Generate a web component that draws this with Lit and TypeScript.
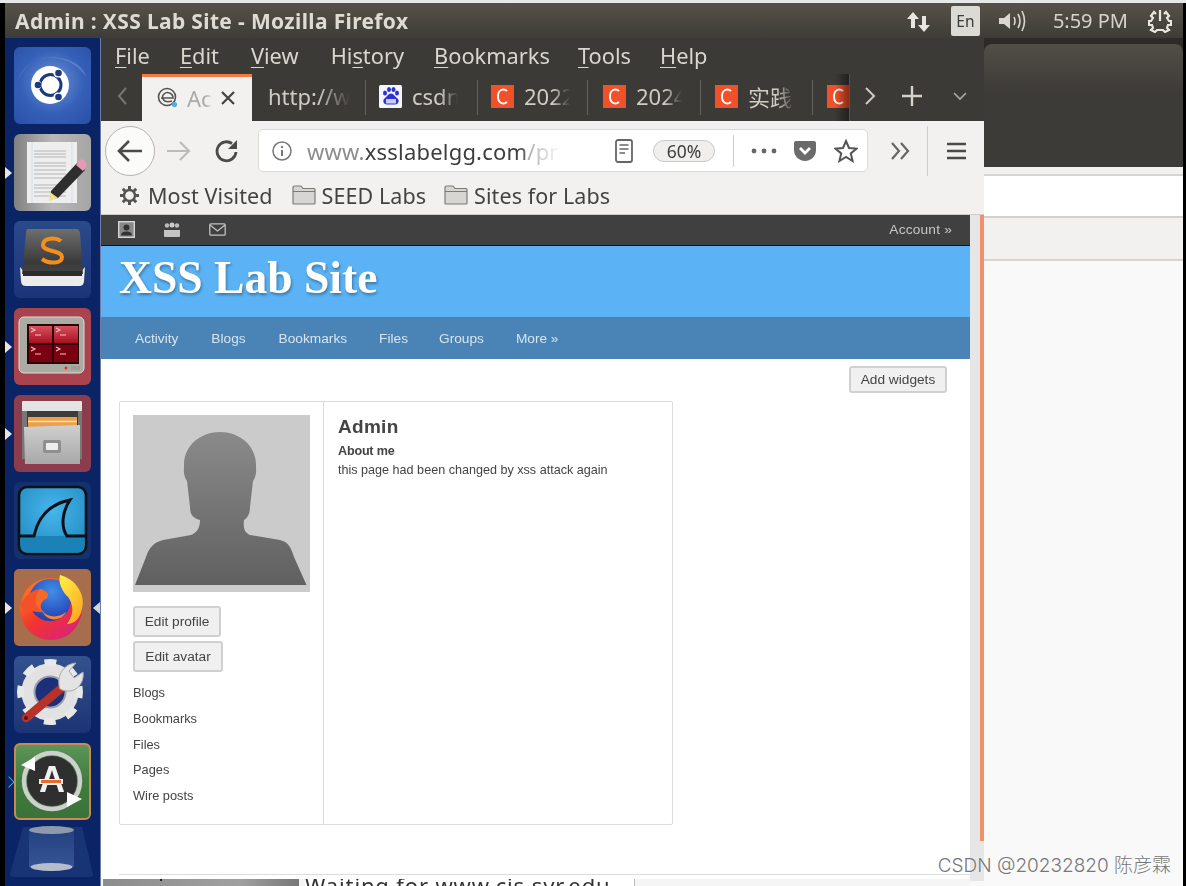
import { LitElement, html, css, svg } from "lit";
import { customElement } from "lit/decorators.js";

const tileSvg = (content: unknown) => html`<svg viewBox="0 0 77 77" width="77" height="77">${content}</svg>`;

const ubuntu = svg`<defs><radialGradient id="ub" cx="50%" cy="45%" r="75%"><stop offset="0" stop-color="#6f93d6"/><stop offset=".55" stop-color="#3560b8"/><stop offset="1" stop-color="#2a4fa6"/></radialGradient></defs>
<rect width="77" height="77" rx="6" fill="url(#ub)"/>
<path d="M4 34C10 8 52 0 72 30 70 16 46 6 26 12 14 16 8 24 4 34Z" fill="#fff" opacity=".16"/>
<circle cx="36" cy="38" r="19" fill="#fff"/>
<circle cx="36.500" cy="38" r="10.500" fill="none" stroke="#1c3a80" stroke-width="3"/>
<circle cx="23" cy="38" r="4.600" fill="#fff"/><circle cx="44" cy="26" r="4.600" fill="#fff"/><circle cx="44" cy="50" r="4.600" fill="#fff"/>
<circle cx="24" cy="38" r="3.300" fill="#1c3a80"/><circle cx="44.500" cy="26" r="3.300" fill="#1c3a80"/><circle cx="44.500" cy="50" r="3.300" fill="#1c3a80"/>`;

const gedit = svg`<defs><linearGradient id="ge" x1="0" x2="1"><stop offset="0" stop-color="#808080"/><stop offset=".5" stop-color="#b8b8b8"/><stop offset="1" stop-color="#a5a5a5"/></linearGradient></defs>
<rect width="77" height="77" rx="6" fill="url(#ge)"/>
<rect x="13" y="8" width="50" height="61" fill="#eeeeee"/>
<path d="M18 8V69M58 8V69" stroke="#d4dcec" stroke-width="1"/>
${[17,20,23,29,32,36,40,44,51,54,58,62].map(y => svg`<path d="M20 ${y}H52" stroke="#b5b5b5" stroke-width="1"/>`)}
<path d="M37 57 L63 29 L71 36 L44 64 L36 65Z" fill="#2e2e2e"/><path d="M62 31 L66 26 Q69 24 71 27 L73 31 L69 37Z" fill="#e69ab4"/>
<path d="M36 58 L44 64 L35 67Z" fill="#f1e08a"/>`;

const sublime = svg`<defs><linearGradient id="su" x1="0" y1="0" x2="0" y2="1"><stop offset="0" stop-color="#2a4a8a"/><stop offset="1" stop-color="#1c3478"/></linearGradient>
<linearGradient id="su2" x1="0" y1="0" x2="0" y2="1"><stop offset="0" stop-color="#6e6e6e"/><stop offset=".75" stop-color="#3a3a3a"/><stop offset="1" stop-color="#444"/></linearGradient></defs>
<rect width="77" height="77" rx="6" fill="url(#su)"/>
<path d="M6 46 L7 60 Q7 65 12 65H65Q70 65 70 60L71 46 L66 52H11Z" fill="#ececec"/>
<path d="M14 8H63Q65 8 66 12L69 53H8L12 12Q12 8 14 8Z" fill="url(#su2)"/>
<rect x="9" y="50" width="59" height="5" fill="#2c2c2c"/>
<path d="M47 20 C41 15.500 29 17 29 24 C29 31 48 29 48 36 C48 43 35 43 28 38" fill="none" stroke="#f58e1c" stroke-width="4"/>`;

const terminal = svg`<defs><linearGradient id="t1" x1="0" y1="0" x2="0" y2="1"><stop offset="0" stop-color="#d8505e"/><stop offset="1" stop-color="#a81020"/></linearGradient></defs>
<rect width="77" height="77" rx="6" fill="#a9444f"/>
<rect x="5" y="9" width="65" height="56" rx="5" fill="#acaba3" stroke="#dcdbd5" stroke-width="1"/>
<rect x="13" y="16" width="52" height="40" fill="#2a0407"/>
<rect x="15" y="18" width="23" height="17" fill="url(#t1)"/><rect x="40" y="18" width="24" height="17" fill="url(#t1)"/>
<rect x="15" y="37" width="23" height="17" fill="#7c0010"/><rect x="40" y="37" width="24" height="17" fill="#7c0010"/>
${[[17,20],[42,20],[17,39],[42,39]].map(([x,y]) => svg`<path d="M${x} ${y}l4 2-4 2M${x+4} ${y+7}h6" fill="none" stroke="#f2c6c6" stroke-width="1.100"/>`)}
<circle cx="52" cy="60" r="1.500" fill="#f22"/><rect x="57" y="58" width="9" height="4" fill="#9e9c95"/>`;

const files = svg`<defs><linearGradient id="fi" x1="0" y1="0" x2="0" y2="1"><stop offset="0" stop-color="#cfcfcf"/><stop offset="1" stop-color="#a8a8a8"/></linearGradient></defs>
<rect width="77" height="77" rx="6" fill="#8c3d4d"/>
<rect x="8" y="6" width="60" height="16" rx="1" fill="#e4e4e4"/>
<rect x="8" y="16" width="60" height="48" fill="#777"/>
<rect x="13" y="16" width="51" height="16" fill="#3c3c3c"/>
<rect x="14" y="22" width="49" height="11" fill="#eda04a"/><path d="M14 26.500H63" stroke="#fbe2b8" stroke-width="1.400"/>
<path d="M10 32 L66 30 L66 69 L11 69Z" fill="url(#fi)"/>
<rect x="29" y="45" width="18" height="13" rx="2" fill="#8f8f8f"/><rect x="32" y="48" width="12" height="7" rx="1" fill="#eee"/>`;

const wireshark = svg`<defs><radialGradient id="wi" cx="50%" cy="35%" r="75%"><stop offset="0" stop-color="#45b7ec"/><stop offset="1" stop-color="#1f86bd"/></radialGradient></defs>
<rect width="77" height="77" rx="6" fill="#15306e"/>
<rect x="5" y="5" width="67" height="67" rx="8" fill="url(#wi)" stroke="#0a1018" stroke-width="2.600"/>
<path d="M6.500 54H70.500V63Q70.500 70.500 63 70.500H14Q6.500 70.500 6.500 63Z" fill="#1b82b8"/>
<path d="M6 54H20C24 35 36 22 56 18 C49 28 46 44 53 54H71" fill="none" stroke="#0a1018" stroke-width="3"/>`;

const firefox = svg`<defs><linearGradient id="fx" x1="0" y1="0" x2=".8" y2="1"><stop offset="0" stop-color="#ff8a1f"/><stop offset=".55" stop-color="#f2352e"/><stop offset="1" stop-color="#d9217e"/></linearGradient>
<linearGradient id="fy" x1="0" y1="0" x2=".6" y2="1"><stop offset="0" stop-color="#fff14a"/><stop offset="1" stop-color="#ffab1f"/></linearGradient>
<radialGradient id="fb" cx=".55" cy=".3" r=".8"><stop offset="0" stop-color="#3f8fe8"/><stop offset="1" stop-color="#2232a8"/></radialGradient></defs>
<rect width="77" height="77" rx="5" fill="#a86d4d"/>
<circle cx="37" cy="40" r="31" fill="url(#fx)"/>
<circle cx="36" cy="31" r="21" fill="url(#fb)"/>
<path d="M46 6 C62 10 72 26 68 40 C66 50 60 55 53 55 C60 46 60 36 54 28 C48 22 44 14 46 6Z" fill="url(#fy)"/>
<path d="M13 11 C13 19 10 22 7 34 C13 26 18 21 26 20 C35 22 37 28 30 31 C26 34 25 40 30 43 C22 44 14 40 11 46 C7 38 6 30 7 34Z" fill="#f2512a"/>
<path d="M26 20 C35 22 37 28 30 31 C26 34 25 40 30 43 C22 40 18 30 26 20Z" fill="#f56a2a"/>
<path d="M28 42 C36 50 46 48 52 43 C48 52 34 54 28 42Z" fill="#f9892a"/>`;

const settings = svg`<defs><linearGradient id="se" x1="0" y1="0" x2="0" y2="1"><stop offset="0" stop-color="#34528f"/><stop offset="1" stop-color="#1d3474"/></linearGradient></defs>
<rect width="77" height="77" rx="6" fill="url(#se)"/>
<circle cx="36" cy="36" r="22" fill="none" stroke="#e2e2e2" stroke-width="13"/>
<circle cx="36" cy="36" r="29.500" fill="none" stroke="#e8e8e8" stroke-width="7" stroke-dasharray="11.580 11.590" transform="rotate(-11 36 36)"/>
<circle cx="36" cy="36" r="15.500" fill="#1d2f78"/>
<circle cx="36" cy="36" r="15.500" fill="none" stroke="#9a9fb0" stroke-width="2"/>
<path d="M12 62 L50 30" stroke="#b8322a" stroke-width="8.500" stroke-linecap="round"/>
<circle cx="12" cy="62" r="2" fill="#5b1510"/>
<path d="M46 33C42 22 48 8 62 7L55 15 60 22 69 16C71 28 60 40 46 33Z" fill="#e4e4e4" stroke="#aaa" stroke-width="1"/>`;

const updater = svg`<defs><linearGradient id="up" x1="0" y1="0" x2="0" y2="1"><stop offset="0" stop-color="#5f955a"/><stop offset=".5" stop-color="#3f7c3d"/><stop offset="1" stop-color="#3a7239"/></linearGradient></defs>
<rect x="1" y="1" width="75" height="75" rx="5" fill="url(#up)" stroke="#c98a52" stroke-width="2"/>
<circle cx="38" cy="38" r="25" fill="#2f2f2f"/>
<circle cx="38" cy="38" r="28" fill="none" stroke="#cfcfcf" stroke-width="4.500"/>
<path d="M7 22 L21 14 L21 28Z" fill="#fff"/><path d="M68 56 L53 64 L53 49Z" fill="#fff"/>
<text x="38" y="49" text-anchor="middle" font-family="Liberation Sans" font-weight="700" font-size="36" fill="#f2f2f2">A</text>
<rect x="25" y="36" width="24" height="5" fill="#f2f2f2"/><rect x="27" y="37" width="20" height="3" fill="#ec6a2c"/>`;

const trash = svg`<defs><linearGradient id="tr" x1="0" x2="0" y1="0" y2="1"><stop offset="0" stop-color="#2c4a8c"/><stop offset="1" stop-color="#4a6aa8"/></linearGradient></defs>
<path d="M9 2H68L79 49Q79 52 76 52H-1Q-4 52 -4 49Z" fill="#2a4a8a" opacity=".45"/>
<rect x="15" y="6" width="45" height="36" fill="url(#tr)" opacity=".6"/>
<ellipse cx="37.500" cy="5" rx="22.500" ry="4" fill="#8e99ad"/>
<ellipse cx="37.500" cy="42" rx="21" ry="4" fill="#b6bccb"/>`;

const icon = (w: number, h: number, body: unknown) =>
  html`<svg class="ico" width=${w} height=${h} viewBox="0 0 ${w} ${h}">${body}</svg>`;

const folder = icon(24, 20, svg`<path d="M1 3Q1 1 3 1H9L11 3.500H22Q23 3.500 23 4.500V18Q23 19 22 19H2Q1 19 1 18Z" fill="#d7d6d2" stroke="#7d7b76" stroke-width="1.200"/><path d="M1 6.500H23" stroke="#7d7b76" stroke-width="1"/>`);
const cIcon = icon(23, 23, svg`<rect width="23" height="23" fill="#f0512a"/><path d="M16 6C12.500 3 7 4.500 7 11.500S12.500 20 16 17" fill="none" stroke="#fff" stroke-width="1.900"/>`);
const baidu = icon(23, 23, svg`<rect width="23" height="23" rx="1.500" fill="#f4f6fb"/>
<ellipse cx="6" cy="8" rx="2" ry="2.600" fill="#2b32d6"/><ellipse cx="10" cy="4.500" rx="2" ry="2.600" fill="#2b32d6"/><ellipse cx="14.500" cy="4.500" rx="2" ry="2.600" fill="#2b32d6"/><ellipse cx="18" cy="8" rx="2" ry="2.600" fill="#2b32d6"/>
<path d="M12 8.500C9 8.500 8 12 5.500 13.500 3.500 15 4 19.500 8 19.500H16C20 19.500 20.500 15 18.500 13.500 16 12 15 8.500 12 8.500Z" fill="#2b32d6"/>
<rect x="7" y="14" width="10" height="4.500" fill="#fff" opacity=".75"/>`);

const tabs = [
  { ico: baidu, text: "csdn", w: 46, box: 112, pad: 13 },
  { ico: cIcon, text: "2022", w: 46, box: 110, pad: 13 },
  { ico: cIcon, text: "2024", w: 46, box: 113, pad: 15 },
  { ico: cIcon, text: "实践", w: 46, box: 112, pad: 14 },
];

@customElement("app-root")
export class AppRoot extends LitElement {
  static styles = css`
    :host { display: block; width: 1186px; height: 886px; overflow: hidden; position: relative;
      font-family: "Noto Sans", "Noto Sans CJK SC", sans-serif; }
    .shot { width: 1186px; height: 886px; box-sizing: border-box; padding-top: 3px; background: #e8e8e8;
      display: flex; flex-direction: column; filter: blur(.6px); overflow: hidden; }
    .frame { flex: 1; min-height: 0; background: #000; padding: 0 3px 0 5px; display: flex; flex-direction: column; }
    .title { height: 35px; flex: none; background: linear-gradient(#565249, #3e3c37); display: flex; align-items: center; color: #dfdbd2; }
    .title b { margin-left: 10px; font-size: 21px; font-weight: 700; letter-spacing: .35px; flex: 1; white-space: nowrap; }
    .tray { display: flex; align-items: center; height: 35px; }
    .en { width: 29px; height: 30px; background: #dcdad5; color: #3c3b37; font-size: 15.5px; border-radius: 2px;
      display: flex; align-items: center; justify-content: center; margin: 0 18px 0 20px; }
    .clock { font-size: 20px; color: #d6d3cc; margin: 0 20px 0 25px; }
    .trayend { width: 11px; }
    .work { flex: 1; min-height: 0; display: flex; }
    .launcher { width: 96px; flex: none; box-sizing: border-box; background: #0a2465; border-right: 1px solid #6d7cab;
      padding: 9px 0 0 9px; display: flex; flex-direction: column; gap: 10px; }
    .tile { width: 77px; height: 77px; border-radius: 6px; position: relative; flex: none; }
    .tile svg { display: block; overflow: visible; }
    .tile.glass { margin-top: -5px; }
    .pip { position: absolute; top: 50%; margin-top: -6px; width: 0; height: 0; border: 6px solid transparent; }
    .pip.l { left: -9px; border-left: 7px solid #e6e6e6; }
    .pip.r { right: -9px; border-right: 7px solid #d5d5d5; }
    .pip.blue { left: -9px; width: 7px; height: 7px; border: 0; border-top: 1.5px solid #4aa3dc; border-right: 1.5px solid #4aa3dc;
      transform: rotate(45deg); margin-top: -4px; }
    .ff { width: 883px; flex: none; display: flex; flex-direction: column; min-height: 0; }
    .menu { height: 36px; background: #3c3a36; color: #d9d6cf; display: flex; align-items: center; gap: 30px; padding: 0 0 2px 14px; box-sizing: border-box;
      font-size: 21.8px; flex: none; }
    .menu u { text-underline-offset: 3px; text-decoration-thickness: 1px; }
    .menu span:nth-child(3) { margin-left: 2px; }
    .menu span:nth-child(4) { margin-left: 2px; }
    .menu span:nth-child(6) { margin-left: -2px; }
    .menu span:nth-child(7) { margin-left: -1px; }
    .tabs { height: 47px; background: #3c3a36; flex: none; display: flex; color: #cfccc4; font-size: 22px; align-items: center; }
    .navbtn { width: 41px; display: flex; justify-content: center; flex: none; padding-bottom: 3px; box-sizing: border-box; }
    .tab-on { width: 110px; height: 47px; background: #f2f1ef; border-top: 3px solid #f47a45; box-sizing: border-box; flex: none;
      display: flex; align-items: center; padding: 0 0 3px 15px; color: #3a3a3a; }
    .tab-on .lbl { width: 28px; margin-left: 9px; color: #aaa; overflow: hidden; white-space: nowrap; }
    .tab-on .x { margin-left: 5px; }
    .tab { display: flex; align-items: center; height: 35px; border-right: 1px solid #65635d; flex: none; box-sizing: border-box; white-space: nowrap; padding-bottom: 3px; gap: 10px; }
    .tab.last { border: 0; }
    .fade { overflow: hidden; display: block; -webkit-mask-image: linear-gradient(90deg, #000 62%, transparent);
      mask-image: linear-gradient(90deg, #000 62%, transparent); }
    .urltext.fade { -webkit-mask-image: linear-gradient(90deg, #000 82%, transparent); mask-image: linear-gradient(90deg, #000 82%, transparent); }
    .tabclip { display: flex; width: 597px; overflow: hidden; align-items: center; flex: none; height: 47px; position: relative; }
    .tabclip::after { content: ""; position: absolute; right: 0; top: 0; bottom: 0; width: 14px; background: linear-gradient(90deg, transparent, rgba(0,0,0,.45)); }
    .tabs .end { display: flex; align-items: center; flex: none; height: 47px; border-left: 1px solid #55534d; padding-bottom: 3px; box-sizing: border-box; }
    .e1, .e2, .e3 { display: flex; justify-content: center; }
    .e1 { width: 39px; } .e2 { width: 46px; } .e3 { width: 49px; }
    .nav { height: 55px; background: #f2f1ef; display: flex; align-items: center; flex: none; padding-top: 4px; box-sizing: border-box; }
    .back { width: 50px; height: 50px; border-radius: 50%; background: #fbfbfa; border: 1px solid #b5b3af; box-sizing: border-box; margin-left: 4px; display: flex; align-items: center; justify-content: center; flex: none; }
    .fwd { margin-left: 12px; } .rel { margin-left: 24px; }
    .url { width: 610px; height: 43px; box-sizing: border-box; background: #fff; border: 1px solid #dcdad7; border-radius: 5px; display: flex; align-items: center; flex: none; margin-left: 19px; }
    .inf { margin-left: 13px; }
    .urltext { width: 254px; margin-left: 15px; font-size: 22px; white-space: nowrap; color: #3d3d3d; flex: none; letter-spacing: .2px; }
    .urltext i { font-style: normal; color: #8d8d8d; }
    .rd { margin-left: 54px; }
    .pill { width: 62px; height: 22px; box-sizing: border-box; border: 1px solid #c9c9c9; background: #f0efed; border-radius: 11px; font-size: 17.5px; color: #3c3c3c;
      display: flex; align-items: center; justify-content: center; margin-left: 20px; flex: none; }
    .sep { width: 1px; height: 32px; background: #cfcdc9; margin: 0 17px 0 18px; flex: none; }
    .poc { margin-left: 16px; } .sta { margin-left: 17px; } .more { margin-left: 22px; }
    .sep.tall { margin: 0 19px 0 17px; height: 50px; }
    .bm { height: 39px; background: #f2f1ef; border-bottom: 1px solid #cfcdc9; box-sizing: border-box; display: flex; align-items: center; font-size: 21.5px; letter-spacing: .08px; color: #45433f; flex: none; padding-left: 18px; }
    .bm span { white-space: nowrap; }
    .bm .t { margin-left: 6px; } .bm .mv { margin-left: 8px; }
    .bm .f1 { margin-left: 19px; } .bm .f2 { margin-left: 18px; }
    .body { flex: 1; min-height: 0; display: flex; }
    .page { width: 869px; flex: none; background: #fff; display: flex; flex-direction: column; font-family: "Liberation Sans", sans-serif; overflow: hidden; }
    .ptop { background: #404040; border-bottom: 1px solid #111; flex: none; display: flex; align-items: center; padding: 0 18px 1px 17px; box-sizing: content-box; height: 29px; color: #c6c6c6; font-size: 13.7px; gap: 28px; }
    .ptop .acc { margin-left: auto; letter-spacing: .2px; }
    .phead { height: 71px; background: #5bb3f5; flex: none; padding-left: 18px; color: #fff; font: bold 45.6px/63px "Liberation Serif", serif; text-shadow: 1px 2px 3px rgba(0,0,0,.35); }
    .pnav { height: 42px; background: #4a84b7; flex: none; display: flex; align-items: center; gap: 32px; padding-left: 34px; color: #d7e4ef; font-size: 13.7px; }
    .pnav span:nth-child(2) { margin-left: 1px; }
    .pnav span:nth-child(3) { margin-left: 1px; }
    .pnav span:nth-child(5) { margin-left: -1px; }
    .main { flex: 1; min-height: 0; display: flex; flex-direction: column; color: #444; }
    .btn { align-self: flex-start; box-sizing: border-box; border: 2px solid #d0d0d0; border-radius: 3px; background: #f0f0f0; color: #444; font-size: 13.7px; display: flex; align-items: center; justify-content: center; }
    .addw { align-self: flex-end; margin: 7px 23px 8px 0; width: 98px; height: 28px; }
    .card { margin-left: 18px; width: 554px; height: 424px; box-sizing: border-box; border: 1.5px solid #dcdcdc; border-radius: 2px; display: flex; flex: none; }
    .side { width: 204px; box-sizing: border-box; border-right: 1.5px solid #dcdcdc; padding: 13px 0 0 13px; flex: none; font-size: 12.8px; }
    .avatar { width: 177px; height: 177px; display: block; margin-bottom: 14px; }
    .side .btn { width: 88px; height: 31px; margin-bottom: 4px; }
    .side .btn + .btn { width: 90px; margin-bottom: 8px; }
    .lnk { height: 25.8px; line-height: 25.8px; }
    .info { padding: 13px 0 0 14px; }
    .info h2 { margin: 0; font-size: 19px; font-weight: 700; line-height: 24px; letter-spacing: .3px; }
    .info h3 { margin: 3px 0 0; font-size: 12.6px; font-weight: 700; line-height: 18px; letter-spacing: -.2px; }
    .info p { margin: 1px 0 0; font-size: 12.6px; line-height: 18px; }
    .rule { margin: 49px 0 0 18px; height: 1px; background: #ddd; flex: none; }
    .status { margin-top: 4px; height: 7px; flex: none; display: flex; overflow: hidden; background: #f5f5f5; }
    .status .bar { width: 196px; margin-left: 2px; flex: none;
      background: linear-gradient(#222, #222) 57px 0 / 2px 2px no-repeat, linear-gradient(90deg, #8c8c8c, #a0a0a0 70%, #777); }
    .status .wait { margin-left: 6px; font: 22px/12px "Noto Sans", sans-serif; color: #333; white-space: nowrap; width: 329px; flex: none; background: #fff; border-right: 1px solid #bbb; letter-spacing: .85px; }
    .scroll { width: 14px; flex: none; background: #f8f8f8; }
    .track { height: 666px; background: #e6e6e6; display: flex; justify-content: flex-end; }
    .thumb { width: 4px; height: 626px; background: #f19069; }
    .desk { flex: 1; display: flex; flex-direction: column; background: #f9f9f9; }
    .desk .dark { height: 129px; background: #2b2a27; padding-top: 6px; box-sizing: border-box; flex: none; }
    .desk .dark div { height: 100%; border-radius: 8px 8px 0 0; background: linear-gradient(#514e47, #3d3b37 40%); }
    .desk .s1 { height: 9px; background: #f2f1ef; border-bottom: 2px solid #d6d5d2; box-sizing: border-box; flex: none; }
    .desk .s2 { height: 42px; background: #fff; border-bottom: 2px solid #d2d1ce; box-sizing: border-box; flex: none; }
    .desk .s3 { height: 43px; background: #f2f1ef; border-bottom: 2px solid #d6d5d2; box-sizing: border-box; flex: none; }
    .ico { display: block; flex: none; }
    .mark { position: absolute; right: 15px; bottom: 9px; color: #777; font: 300 19px Inter, "Noto Sans CJK SC", sans-serif; white-space: nowrap; text-shadow: 0 0 2px #fff; }
  `;

  render() {
    return html`<div class="shot"><div class="frame">
      <div class="title"><b>Admin : XSS Lab Site - Mozilla Firefox</b>
        <div class="tray">
          ${icon(26, 24, svg`<path d="M8 3L2 10H6V19H10V10H14Z" fill="#e8e6e0"/><path d="M19 23L13 16H17V7H21V16H25Z" fill="#e8e6e0"/>`)}
          <div class="en">En</div>
          ${icon(30, 24, svg`<path d="M1 9H6L12 4V20L6 15H1Z" fill="#dad7d0"/><path d="M16 8Q18 12 16 16M20 5Q24 12 20 19M24 2Q29 12 24 22" fill="none" stroke="#dad7d0" stroke-width="1.600"/>`)}
          <div class="clock">5:59 PM</div>
          ${icon(24, 24, svg`<path d="M12 1V12" stroke="#e8e6e0" stroke-width="2.200"/><path d="M8 5L6 3 3 7 5 9 3 12 1 12V16L4 16 5 19 3 21 7 23 9 21 15 21 17 23 21 21 19 19 20 16 23 16V12L21 12 19 9 21 7 18 3 16 5" fill="none" stroke="#e8e6e0" stroke-width="2.200"/>`)}
          <div class="trayend"></div>
        </div>
      </div>
      <div class="work">
        <nav class="launcher">
          <div class="tile">${tileSvg(ubuntu)}</div>
          <div class="tile">${tileSvg(gedit)}<i class="pip l"></i></div>
          <div class="tile">${tileSvg(sublime)}</div>
          <div class="tile">${tileSvg(terminal)}<i class="pip l"></i></div>
          <div class="tile">${tileSvg(files)}<i class="pip l"></i></div>
          <div class="tile">${tileSvg(wireshark)}</div>
          <div class="tile">${tileSvg(firefox)}<i class="pip l"></i><i class="pip r"></i></div>
          <div class="tile">${tileSvg(settings)}</div>
          <div class="tile">${tileSvg(updater)}<i class="pip blue"></i></div>
          <div class="tile glass">${tileSvg(trash)}</div>
        </nav>
        <div class="ff">
          <div class="menu"><span><u>F</u>ile</span><span><u>E</u>dit</span><span><u>V</u>iew</span><span>Hi<u>s</u>tory</span><span><u>B</u>ookmarks</span><span><u>T</u>ools</span><span><u>H</u>elp</span></div>
          <div class="tabs">
            <div class="navbtn">${icon(12, 20, svg`<path d="M10 2L3 10 10 18" fill="none" stroke="#77756f" stroke-width="2"/>`)}</div>
            <div class="tab-on">
              ${icon(21, 22, svg`<circle cx="10" cy="10" r="8.500" fill="none" stroke="#555" stroke-width="1.600"/><path d="M4 11H16C16 6 10 4 7 7S6 17 15 14" fill="none" stroke="#555" stroke-width="1.600"/><circle cx="17.500" cy="17.500" r="2.600" fill="#4fb0d8"/>`)}
              <span class="lbl fade">Ac</span>
              <span class="x">${icon(16, 16, svg`<path d="M2 2L14 14M14 2L2 14" stroke="#444" stroke-width="2.200"/>`)}</span>
            </div>
            <div class="tabclip">
              <div class="tab" style="width:114px;padding-left:16px"><span class="fade" style="width:82px">http://www</span></div>
              ${tabs.map(t => html`<div class="tab" style="width:${t.box}px;padding-left:${t.pad}px">${t.ico}<span class="fade" style="width:${t.w}px">${t.text}</span></div>`)}
              <div class="tab last" style="padding-left:14px">${cIcon}</div>
            </div>
            <div class="end">
              <div class="e1">${icon(12, 20, svg`<path d="M2 2L10 10 2 18" fill="none" stroke="#cfccc4" stroke-width="2"/>`)}</div>
              <div class="e2">${icon(22, 22, svg`<path d="M11 1V21M1 11H21" stroke="#d5d2ca" stroke-width="2.400"/>`)}</div>
              <div class="e3">${icon(14, 9, svg`<path d="M1 1L7 7 13 1" fill="none" stroke="#aaa79f" stroke-width="1.700"/>`)}</div>
            </div>
          </div>
          <div class="nav">
            <div class="back">${icon(26, 24, svg`<path d="M25 12H3M12 2L2 12 12 22" fill="none" stroke="#4a4a4a" stroke-width="2.600"/>`)}</div>
            <div class="fwd">${icon(24, 22, svg`<path d="M0 11H22M13 2L22 11 13 20" fill="none" stroke="#bdbcb9" stroke-width="2.200"/>`)}</div>
            <div class="rel">${icon(24, 24, svg`<path d="M21 13A9.500 9.500 0 1 1 17 4.500" fill="none" stroke="#4a4a4a" stroke-width="2.800"/><path d="M22 1V10H13Z" fill="#4a4a4a"/>`)}</div>
            <div class="url">
              <div class="inf">${icon(20, 20, svg`<circle cx="10" cy="10" r="9" fill="none" stroke="#777" stroke-width="1.500"/><path d="M10 9V15" stroke="#777" stroke-width="2"/><circle cx="10" cy="6" r="1.200" fill="#777"/>`)}</div>
              <div class="urltext fade"><i>www.</i>xsslabelgg.com<i>/profile</i></div>
              <div class="rd">${icon(18, 24, svg`<rect x="1" y="1" width="16" height="22" rx="2" fill="#fff" stroke="#666" stroke-width="1.800"/><path d="M4.500 6H13.500M4.500 10H13.500M4.500 14H10" stroke="#666" stroke-width="1.500"/>`)}</div>
              <div class="pill">60%</div>
              <div class="sep"></div>
              ${icon(26, 6, svg`<circle cx="3" cy="3" r="2.400" fill="#666"/><circle cx="13" cy="3" r="2.400" fill="#666"/><circle cx="23" cy="3" r="2.400" fill="#666"/>`)}
              <div class="poc">${icon(24, 22, svg`<path d="M1 3Q1 1 3 1H21Q23 1 23 3V10C23 17 17 21 12 21S1 17 1 10Z" fill="#6b6b6b"/><path d="M7 8L12 13 17 8" fill="none" stroke="#fff" stroke-width="2.800"/>`)}</div>
              <div class="sta">${icon(24, 24, svg`<path d="M12 2L15 9 22.500 9.600 16.800 14.400 18.600 22 12 18 5.400 22 7.200 14.400 1.500 9.600 9 9Z" fill="none" stroke="#555" stroke-width="2"/>`)}</div>
            </div>
            <div class="more">${icon(20, 20, svg`<path d="M2 2L9 10 2 18M11 2L18 10 11 18" fill="none" stroke="#666" stroke-width="2.200"/>`)}</div>
            <div class="sep tall"></div>
            ${icon(19, 18, svg`<path d="M0 2H19M0 9H19M0 16H19" stroke="#4a4a4a" stroke-width="2.400"/>`)}
          </div>
          <div class="bm">
            ${icon(21, 21, svg`<circle cx="10.500" cy="10.500" r="5.500" fill="none" stroke="#55534e" stroke-width="2.400"/><path d="M10.500 1V4.500M10.500 16.500V20M1 10.500H4.500M16.500 10.500H20M3.800 3.800L6.200 6.200M14.800 14.800L17.200 17.200M17.200 3.800L14.800 6.200M6.200 14.800L3.800 17.200" stroke="#55534e" stroke-width="3"/>`)}
            <span class="mv">Most Visited</span>
            <span class="f1">${folder}</span><span class="t">SEED Labs</span>
            <span class="f2">${folder}</span><span class="t">Sites for Labs</span>
          </div>
          <div class="body">
            <div class="page">
              <div class="ptop">
                ${icon(17, 17, svg`<rect x=".7" y=".7" width="15.600" height="15.600" fill="#888" stroke="#ddd" stroke-width="1.300"/><circle cx="8.500" cy="6.500" r="3" fill="#333"/><path d="M3 14.500Q3 10.500 8.500 10.500T14 14.500Z" fill="#333"/>`)}
                ${icon(18, 16, svg`<circle cx="4" cy="3.500" r="2.200" fill="#bbb"/><circle cx="9" cy="3" r="2.500" fill="#ccc"/><circle cx="14" cy="3.500" r="2.200" fill="#bbb"/><path d="M1 8H17V14Q17 15 16 15H2Q1 15 1 14Z" fill="#c4c4c4"/>`)}
                ${icon(17, 13, svg`<rect x=".8" y=".8" width="15.400" height="11.400" rx="1" fill="none" stroke="#c2c2c2" stroke-width="1.300"/><path d="M1 2L8.500 8 16 2" fill="none" stroke="#c2c2c2" stroke-width="1.300"/>`)}
                <span class="acc">Account »</span>
              </div>
              <div class="phead">XSS Lab Site</div>
              <div class="pnav"><span>Activity</span><span>Blogs</span><span>Bookmarks</span><span>Files</span><span>Groups</span><span>More »</span></div>
              <div class="main">
                <div class="btn addw">Add widgets</div>
                <div class="card">
                  <div class="side">
                    <svg class="avatar" viewBox="0 0 177 177">
                      <defs><linearGradient id="av" x1="0" y1="0" x2="0" y2="1"><stop offset="0" stop-color="#8a8a8a"/><stop offset="1" stop-color="#606060"/></linearGradient></defs>
                      <rect width="177" height="177" fill="#cbcbcb"/>
                      <path d="M2 170L13 142C16 132 22 127 30 125L58 120C63 118 67 114 67 105C60 103 57 100 57 92L54 66C50 60 51 56 51 50C51 30 68 17 87 17C106 17 123 30 123 50C123 56 124 60 120 66L117 92C117 100 114 103 111 105C110 114 112 118 117 120L147 125C155 127 158 132 161 142L173.500 170Z" fill="url(#av)"/></svg>
                    <div class="btn">Edit profile</div>
                    <div class="btn">Edit avatar</div>
                    <div class="lnk">Blogs</div><div class="lnk">Bookmarks</div><div class="lnk">Files</div><div class="lnk">Pages</div><div class="lnk">Wire posts</div>
                  </div>
                  <div class="info">
                    <h2>Admin</h2>
                    <h3>About me</h3>
                    <p>this page had been changed by xss attack again</p>
                  </div>
                </div>
                <div class="rule"></div>
                <div class="status"><div class="bar"></div><div class="wait">Waiting for www.cis.syr.edu...</div></div>
              </div>
            </div>
            <div class="scroll"><div class="track"><div class="thumb"></div></div></div>
          </div>
        </div>
        <div class="desk"><div class="dark"><div></div></div><div class="s1"></div><div class="s2"></div><div class="s3"></div></div>
      </div>
    </div></div>
    <div class="mark">CSDN @20232820 陈彦霖</div>`;
  }
}
